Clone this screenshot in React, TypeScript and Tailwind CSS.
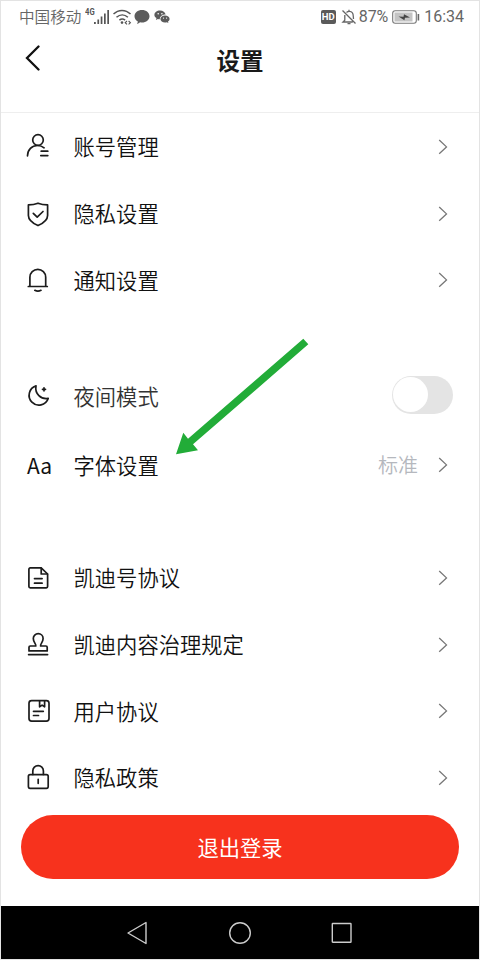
import React from 'react';

type RowProps = {
  icon: React.ReactNode;
  label: string;
  value?: string;
};

const LineIcon: React.FC<{ children: React.ReactNode }> = ({ children }) => (
  <svg
    viewBox="0 0 24 24"
    className="h-6 w-6 shrink-0 overflow-visible text-[#1c1c1c]"
    fill="none"
    stroke="currentColor"
    strokeWidth="1.7"
    strokeLinecap="round"
    strokeLinejoin="round"
  >
    {children}
  </svg>
);

const AccountIcon = () => (
  <LineIcon>
    <circle cx="12" cy="5" r="5.3" />
    <path d="M1.500 20.800C1.600 14.600 5.800 10.500 11.500 10.500c2.700 0 4.800.7 6.600 2.300M15.200 16.200h6.600M14.800 20.600h7" />
  </LineIcon>
);

const ShieldIcon = () => (
  <LineIcon>
    <path d="M12 1.200c3 1.200 6.200 1.700 9.600 1.700v10.500c0 4.600-4 7.600-9.600 10.200C6.400 21 2.400 18 2.400 13.400V2.900c3.400 0 6.600-.5 9.600-1.700z" />
    <path d="M7.300 11.300l3.900 3.900 5.800-5.700" />
  </LineIcon>
);

const BellIcon = () => (
  <LineIcon>
    <path d="M2.300 18.500h19M3.900 18.300V9.200a7.900 7.900 0 0 1 15.800 0v9.100M8.800 22.300c1.900 1 4.300 1 6.200 0" />
  </LineIcon>
);

const MoonIcon = () => (
  <LineIcon>
    <path d="M10 2.900A9.800 9.800 0 1 0 22.200 15.400C15 16.500 8.600 11 10 2.900z" />
    <path d="M18 4.800v3M16.500 6.300h3" />
  </LineIcon>
);

const FileIcon = () => (
  <LineIcon>
    <path d="M4.200 1.900h11L21.600 8v12.500a1.300 1.300 0 0 1-1.300 1.300H4.200a1.300 1.300 0 0 1-1.300-1.300V3.200a1.300 1.300 0 0 1 1.300-1.300z" />
    <path d="M15.200 2.200V8h6.200M8.500 12.600h7.600M8.500 17.200h7.600" />
  </LineIcon>
);

const StampIcon = () => (
  <LineIcon>
    <path d="M9.800 13c.5-2.200-2.500-3.600-2.500-7.500a4.900 4.900 0 0 1 9.800 0c0 3.900-3 5.300-2.500 7.500h5.300a1.300 1.300 0 0 1 1.300 1.300v3.600H3v-3.600A1.300 1.300 0 0 1 4.300 13zM2.600 21.600h19" />
  </LineIcon>
);

const BookIcon = () => (
  <LineIcon>
    <rect x="3" y="1.600" width="20" height="20.600" rx="2.600" />
    <path d="M13.600 1.800v6l2.500-1.700 2.500 1.700v-6M7.500 12.300h9.800M7.500 16.500h5" />
  </LineIcon>
);

const LockIcon = () => (
  <LineIcon>
    <rect x="2.400" y="8.600" width="19.800" height="13.700" rx="1.700" />
    <path d="M6.800 8.400V4.900a5.300 5.300 0 0 1 10.600 0v3.500M12.200 13.300v4" />
  </LineIcon>
);

const Chevron = () => (
  <svg viewBox="0 0 10 16" className="h-4 w-2.5" fill="none" stroke="#777" strokeWidth="1.3">
    <path d="M1.200 1L8.500 7.900 1.200 14.800" />
  </svg>
);

const Row: React.FC<RowProps> = ({ icon, label, value }) => (
  <div className="flex h-[66.7px] items-center pr-[31px] pl-[25px]">
    {icon}
    <span className="ml-[23.5px] flex-1 pb-[2px] text-[21.3px] leading-none font-[350] text-[#111]">{label}</span>
    {value && <span className="mr-[20px] text-[20px] leading-none font-[350] text-[#b5b8be]">{value}</span>}
    <Chevron />
  </div>
);

const StatusBar = () => (
  <div className="flex h-8 items-center pr-[15px] pl-[18px] text-[15.6px] leading-none text-[#666]">
    <span className="font-[350]">中国移动</span>
    <span className="ml-[4px] -mt-[10px] inline-block w-[10px] origin-left scale-x-90 font-['Roboto'] text-[8.5px] font-bold text-[#555]">4G</span>
    <svg viewBox="0 0 16 16" className="-ml-[1px] h-4 w-4" fill="#555">
      <path d="M0 13h1.800v2H0zM3.400 10.500h1.700V15H3.400zM6.700 7.500h1.700V15H6.700zM10 4.500h1.700V15H10zM13.300 1H15v14h-1.700z" />
    </svg>
    <svg viewBox="0 0 19 16" className="ml-[3px] h-4 w-[19px]" fill="none" stroke="#555" strokeWidth="1.5">
      <path d="M.5 5c5-4.800 12-4.800 17 0M3.500 8.300c3.500-3.200 8-3.200 11.400 0M6.400 11.200c1.700-1.400 4-1.400 5.700 0" />
      <circle cx="9" cy="13.600" r="1.300" fill="#555" stroke="none" />
      <path d="M14 12l-1.800 1.700L14 15.300M15.600 12l1.800 1.700-1.800 1.600" strokeWidth="1.100" />
    </svg>
    <svg viewBox="0 0 16 16" className="ml-[2px] h-4 w-4" fill="#5c5c5c">
      <path d="M8 1c4.200 0 7.500 2.700 7.500 6.200s-3.300 6.300-7.500 6.300c-.7 0-1.300 0-1.900-.2-.9.900-2 1.500-3 1.600.5-.8.700-1.700.6-2.600C1.800 11.200.500 9.300.500 7.200.5 3.700 3.800 1 8 1z" />
    </svg>
    <svg viewBox="0 0 16 16" className="ml-[4px] h-4 w-4" fill="#5c5c5c">
      <path d="M6 1.600c3 0 5.300 1.700 5.600 4C8.500 5.600 5.800 7.400 5.800 10.200c-.7 0-1.300-.1-1.900-.3L1.900 11l.6-1.900C1.200 8.300.4 7.200.4 5.900c0-2.400 2.500-4.300 5.600-4.300z" />
      <path d="M11 6.500c2.500 0 4.600 1.500 4.600 3.500 0 1.100-.7 2-1.600 2.600l.4 1.400-1.600-.8c-.6.200-1.100.3-1.800.3-2.500 0-4.600-1.600-4.600-3.500s2.100-3.500 4.600-3.500z" />
      <g fill="#fff">
        <circle cx="4.200" cy="4.800" r=".8" />
        <circle cx="7.900" cy="4.800" r=".8" />
        <circle cx="9.500" cy="9.100" r=".6" />
        <circle cx="12.600" cy="9.100" r=".6" />
      </g>
    </svg>

    <div className="ml-auto flex items-center">
      <span className="flex h-[14px] w-[15px] items-center justify-center rounded-[2px] bg-[#5a5a5a] font-['Roboto'] text-[9.5px] font-bold text-white">
        HD
      </span>
      <svg viewBox="0 0 16 16" className="ml-[5px] h-4 w-4" fill="none" stroke="#666" strokeWidth="1.300">
        <path d="M1.500 1.500l13 13M3.800 6v5.300L2 13h9.800M5.500 3.400C7 2 10 2 11.300 3.600c1.300 1.500.9 4 1.200 6.400M8 .800v1.400M6.500 14.700h3" />
      </svg>
      <span className="ml-[2px] font-['Roboto'] text-[16px] tracking-[-0.1px]">87%</span>
      <svg viewBox="0 0 29 14" className="ml-[4px] h-[14px] w-[29px]">
        <rect x=".7" y=".7" width="23.600" height="12.600" rx="2.500" fill="none" stroke="#777" strokeWidth="1.100" />
        <rect x="2.500" y="2.500" width="18" height="9" fill="#c4c4c4" />
        <path d="M6.500 6.400l5 .4.500-2.600 6 3.400-5 .2-.6 2.400z" fill="#444" />
        <rect x="25.600" y="4" width="1.600" height="6.500" fill="#666" />
      </svg>
      <span className="ml-[3px] font-['Roboto'] text-[16px]">16:34</span>
    </div>
  </div>
);

const Header = () => (
  <header className="grid h-20 grid-cols-3 items-center border-b border-[#eee] pb-[29px]">
    <svg viewBox="0 0 16 26" className="ml-6 h-[26px] w-4" fill="none" stroke="#111" strokeWidth="2.300" strokeLinecap="round">
      <path d="M13.500 1.500L2 13l11.500 11.500" />
    </svg>
    <h1 className="mt-[5px] text-center text-[23.5px] leading-none font-bold text-[#1a1a1a]">设置</h1>
  </header>
);

const NavBar = () => (
  <nav className="flex h-[53px] items-center justify-center gap-[79px] bg-black">
    <svg viewBox="0 0 22 24" className="h-6 w-[22px]" fill="none" stroke="#ccc" strokeWidth="1.400" strokeLinejoin="round">
      <path d="M19 1.500v21L1 12z" />
    </svg>
    <svg viewBox="0 0 24 24" className="h-6 w-6" fill="none" stroke="#ccc" strokeWidth="1.400">
      <circle cx="12" cy="12" r="10.300" />
    </svg>
    <svg viewBox="0 0 22 24" className="h-6 w-[22px]" fill="none" stroke="#ccc" strokeWidth="1.400">
      <rect x="1.300" y="2.500" width="18.700" height="18.700" rx=".5" />
    </svg>
  </nav>
);

const App: React.FC = () => {
  return (
    <div className="relative flex h-[960px] w-[480px] flex-col overflow-hidden border border-[#e3e3e3] bg-white font-['Noto_Sans_CJK_SC',sans-serif]">
      <StatusBar />
      <Header />

      <section className="mt-[0.6px]">
        <Row icon={<AccountIcon />} label="账号管理" />
        <Row icon={<ShieldIcon />} label="隐私设置" />
        <Row icon={<BellIcon />} label="通知设置" />
      </section>

      <section className="mt-[46.4px]">
        <div className="flex h-[69px] items-center pr-[26px] pl-[25px]">
          <MoonIcon />
          <span className="ml-[23.5px] flex-1 pt-[2px] text-[21.3px] leading-none font-[350] text-[#333]">夜间模式</span>
          <button className="flex h-[38px] w-[61px] items-center rounded-full bg-[#e4e4e4] pl-[1px]">
            <span className="h-[35px] w-[35px] rounded-full bg-white" />
          </button>
        </div>
        <div className="mt-[3px]">
          <Row
            icon={<span className="w-6 pl-[1px] text-[21px] leading-none whitespace-nowrap text-[#111]">Aa</span>}
            label="字体设置"
            value="标准"
          />
        </div>
      </section>

      <section className="mt-[46px]">
        <Row icon={<FileIcon />} label="凯迪号协议" />
        <Row icon={<StampIcon />} label="凯迪内容治理规定" />
        <Row icon={<BookIcon />} label="用户协议" />
        <Row icon={<LockIcon />} label="隐私政策" />
      </section>

      <div className="mt-auto px-5 pb-[27px]">
        <button className="h-16 w-full rounded-full bg-[#f7321d] text-[21.3px] text-white">退出登录</button>
      </div>
      <NavBar />

      {/* pointer to the font setting row */}
      <svg viewBox="0 0 134 118" className="pointer-events-none absolute top-[336px] left-[174px] h-[118px] w-[134px]">
        <path d="M1 117.300L8.300 95.700l4.700 6L128.300 1.700l5 5.600L18 107.300l5 6z" fill="#22ac38" />
      </svg>
    </div>
  );
};

export default App;
